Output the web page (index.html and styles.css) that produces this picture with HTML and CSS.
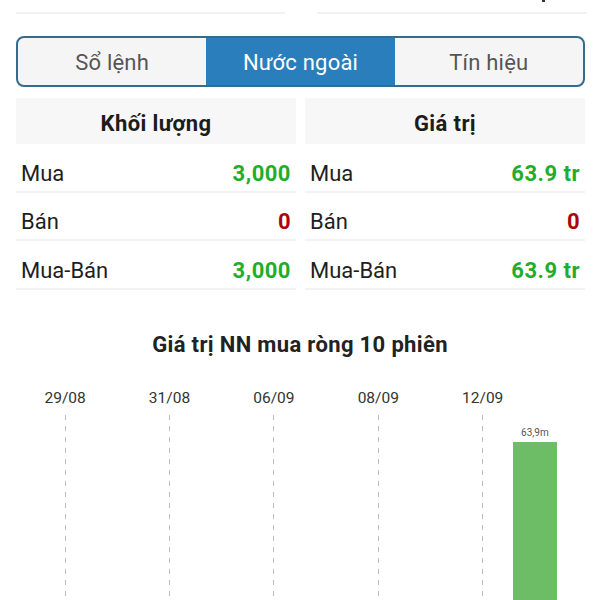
FILE: index.html
```html
<!DOCTYPE html>
<html lang="vi">
<head>
<meta charset="utf-8">
<link rel="stylesheet" href="styles.css">
</head>
<body>
<div class="page">
  <div class="top">
    <div class="top-cell"></div>
    <div class="top-cell right"><span class="dot"></span></div>
  </div>

  <div class="tabs">
    <div class="tab">Sổ lệnh</div>
    <div class="tab active">Nước ngoài</div>
    <div class="tab">Tín hiệu</div>
  </div>

  <div class="tables">
    <div class="table">
      <div class="head">Khối lượng</div>
      <div class="row"><span class="label">Mua</span><span class="val up">3,000</span></div>
      <div class="row"><span class="label">Bán</span><span class="val down">0</span></div>
      <div class="row"><span class="label">Mua-Bán</span><span class="val up">3,000</span></div>
    </div>
    <div class="table">
      <div class="head">Giá trị</div>
      <div class="row"><span class="label">Mua</span><span class="val up">63.9 tr</span></div>
      <div class="row"><span class="label">Bán</span><span class="val down">0</span></div>
      <div class="row"><span class="label">Mua-Bán</span><span class="val up">63.9 tr</span></div>
    </div>
  </div>

  <div class="chart">
    <div class="chart-title">Giá trị NN mua ròng 10 phiên</div>
    <div class="cols">
      <div class="col"><div class="date">29/08</div><div class="plot line"></div></div>
      <div class="col"><div class="date"></div><div class="plot"></div></div>
      <div class="col"><div class="date">31/08</div><div class="plot line"></div></div>
      <div class="col"><div class="date"></div><div class="plot"></div></div>
      <div class="col"><div class="date">06/09</div><div class="plot line"></div></div>
      <div class="col"><div class="date"></div><div class="plot"></div></div>
      <div class="col"><div class="date">08/09</div><div class="plot line"></div></div>
      <div class="col"><div class="date"></div><div class="plot"></div></div>
      <div class="col"><div class="date">12/09</div><div class="plot line"></div></div>
      <div class="col"><div class="date"></div><div class="plot"><div class="bar-val">63,9m</div><div class="bar"></div></div></div>
    </div>
  </div>
</div>
</body>
</html>
```

FILE: styles.css
```css
* { box-sizing: border-box; }
html, body { margin: 0; padding: 0; background: #fff; }
body {
  font-family: Roboto, "Noto Sans", "Liberation Sans", sans-serif;
  color: #212121;
  overflow: hidden;
}
.page { width: 600px; height: 600px; overflow: hidden; }

.top {
  display: flex;
  justify-content: space-between;
  padding: 0 13px 0 16px;
}
.top-cell {
  width: 269px;
  height: 14px;
  border-bottom: 2px solid #f2f2f2;
}
.top-cell.right {
  width: 270px;
  display: flex;
  justify-content: flex-end;
  padding-right: 42px;
}
.dot { width: 3px; height: 2px; background: #333; }

.tabs {
  display: flex;
  margin: 22px 15px 0 16px;
  height: 51px;
  border: 2px solid #336c8d;
  border-radius: 8px;
  overflow: hidden;
  background: #f5f5f5;
}
.tab {
  flex: 1;
  display: flex;
  align-items: center;
  justify-content: center;
  font-size: 22px;
  letter-spacing: 0.2px;
  color: #555;
  padding-top: 1px;
}
.tab.active { background: #2a7ebb; color: #fff; }

.tables {
  display: flex;
  gap: 9px;
  margin: 11px 15px 0 16px;
}
.table { flex: 1; }
.head {
  height: 46px;
  background: #f7f7f7;
  text-align: center;
  padding-top: 14.5px;
  line-height: 22px;
  font-weight: 700;
  font-size: 22px;
  letter-spacing: 0.4px;
  color: #1c1c1c;
}
.row {
  height: 48.5px;
  border-bottom: 2px solid #f2f2f2;
  display: flex;
  align-items: flex-start;
  justify-content: space-between;
  padding: 18.5px 5px 0 5px;
  font-size: 22px;
  line-height: 22px;
}
.label { color: #1e1e1e; }
.val { font-weight: 700; letter-spacing: 0.5px; }
.up { color: #1fae2a; }
.down { color: #a80808; }

.chart { margin-top: 42px; }
.chart-title {
  text-align: center;
  font-weight: 700;
  font-size: 22px;
  letter-spacing: 0.35px;
  line-height: 26px;
  color: #222;
}
.cols {
  display: grid;
  grid-template-columns: repeat(10, 1fr);
  margin: 30px 39px 0 39px;
  height: 260px;
}
.col { display: flex; flex-direction: column; align-items: center; }
.date {
  height: 27px;
  font-size: 15.5px;
  line-height: 21px;
  color: #333;
  white-space: nowrap;
}
.plot {
  flex: 1;
  width: 100%;
  display: flex;
  flex-direction: column;
  align-items: center;
}
.plot.line {
  background-image: linear-gradient(#bdbdbd 5px, transparent 5px);
  background-size: 1px 11px;
  background-repeat: repeat-y;
  background-position: center top;
}
.bar-val {
  margin-top: 11px;
  font-size: 10px;
  line-height: 13px;
  color: #555;
}
.bar {
  margin-top: 3px;
  width: 44px;
  flex: 1;
  background: #6dbd66;
}
```
